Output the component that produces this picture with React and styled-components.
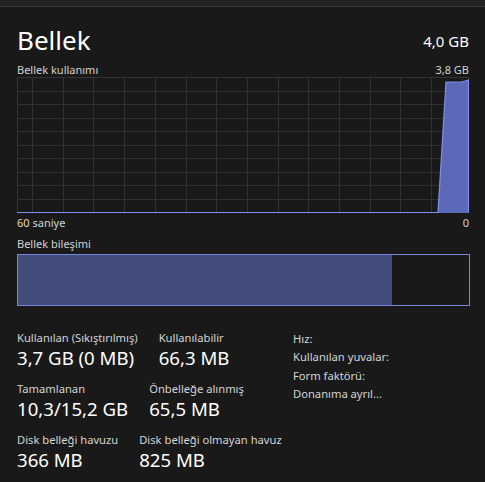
import React from "react";
import styled, { createGlobalStyle } from "styled-components";

const Global = createGlobalStyle`
  html, body { margin: 0; padding: 0; background: #191919; }
  body { font-family: "Noto Sans", "Segoe UI", sans-serif; color: #e6e6e6; }
  * { box-sizing: border-box; }
`;

const Page = styled.div`
  width: 485px;
  height: 482px;
  overflow: hidden;
  background: #191919;
`;

const TopStrip = styled.div`
  height: 7px;
  background: #222222;
  border-bottom: 1px solid #353535;
`;

const Content = styled.div`
  padding: 0 16px 0 17px;
`;

const Header = styled.div`
  display: flex;
  justify-content: space-between;
  align-items: flex-end;
  margin-top: 14px;
  height: 34px;
`;

const Title = styled.div`
  font-size: 26px;
  line-height: 30px;
  color: #ffffff;
`;

const Total = styled.div`
  font-size: 15px;
  line-height: 20px;
  color: #ffffff;
  margin-bottom: 4px;
`;

const CaptionRow = styled.div`
  display: flex;
  justify-content: space-between;
  font-size: 11px;
  line-height: 15px;
  color: #d2d2d2;
  margin-top: ${(p) => p.$top || 0}px;
`;

const Accent = styled.span`
  color: ${(p) => p.$c || "inherit"};
`;

const Graph = styled.svg`
  display: block;
  width: 452px;
  height: 136px;
`;

const Bar = styled.div`
  width: 453px;
  height: 52px;
  border: 1px solid #7587df;
  margin-top: 3px;
  display: flex;
`;

const BarFill = styled.div`
  background: #434d7c;
  height: 100%;
`;

const Stats = styled.div`
  display: flex;
  margin-top: 24px;
`;

const LeftStats = styled.div`
  display: flex;
  flex-direction: column;
  gap: 12px;
  width: 276px;
`;

const StatRow = styled.div`
  display: flex;
  gap: 21px;
`;

const Stat = styled.div`
  display: flex;
  flex-direction: column;
`;

const Label = styled.div`
  font-size: 11.2px;
  line-height: 16px;
  color: #d4d4d4;
  white-space: nowrap;
`;

const Value = styled.div`
  font-size: 18.6px;
  line-height: 23px;
  color: #ffffff;
  white-space: nowrap;
`;

const RightStats = styled.div`
  display: flex;
  flex-direction: column;
  font-size: 11.2px;
  line-height: 18.3px;
  color: #d4d4d4;
  white-space: nowrap;
`;

const W = 452;
const H = 136;
const vLines = Array.from({ length: 15 }, (_, i) => 15 + i * 30.7);
const hLines = Array.from({ length: 9 }, (_, i) => (i + 1) * 13.55);

function MemoryGraph() {
  return (
    <Graph viewBox={`0 0 ${W} ${H}`}>
      {vLines.map((x) => (
        <line key={"v" + x} x1={Math.round(x) + 0.5} x2={Math.round(x) + 0.5} y1="0" y2={H} stroke="#303030" strokeWidth="1" />
      ))}
      {hLines.map((y) => (
        <line key={"h" + y} x1="0" x2={W} y1={Math.round(y) + 0.5} y2={Math.round(y) + 0.5} stroke="#303030" strokeWidth="1" />
      ))}
      <rect x="0.5" y="0.5" width={W - 1} height={H - 1} fill="none" stroke="#333333" strokeWidth="1" />
      <polygon points={`421,135 429,5 445,5 452,3 452,136 421,136`} fill="#5b69b8" />
      <polyline points={`0,135.5 421,135.5 429,5 445,5 451.5,3 451.5,136`} fill="none" stroke="#7e90ea" strokeWidth="1.2" />
    </Graph>
  );
}

export default function App() {
  return (
    <Page>
      <Global />
      <TopStrip />
      <Content>
        <Header>
          <Title>Bellek</Title>
          <Total>4,0 GB</Total>
        </Header>
        <CaptionRow $top={7}>
          <span>Bellek kullanımı</span>
          <span>3,8 GB</span>
        </CaptionRow>
        <MemoryGraph />
        <CaptionRow $top={2}>
          <span><Accent $c="#e8d9b0">60</Accent> saniye</span>
          <span>0</span>
        </CaptionRow>
        <CaptionRow $top={6}>
          <span>Bellek bileşimi</span>
        </CaptionRow>
        <Bar>
          <BarFill style={{ width: `${(374 / 451) * 100}%` }} />
        </Bar>
        <Stats>
          <LeftStats>
            <StatRow>
              <Stat>
                <Label>Kullanılan (Sıkıştırılmış)</Label>
                <Value>3,7 GB (0 MB)</Value>
              </Stat>
              <Stat>
                <Label>Kullanılabilir</Label>
                <Value>66,3 MB</Value>
              </Stat>
            </StatRow>
            <StatRow>
              <Stat>
                <Label>Tamamlanan</Label>
                <Value>10,3/15,2 GB</Value>
              </Stat>
              <Stat>
                <Label>Önbelleğe alınmış</Label>
                <Value>65,5 MB</Value>
              </Stat>
            </StatRow>
            <StatRow>
              <Stat>
                <Label>Disk belleği havuzu</Label>
                <Value>366 MB</Value>
              </Stat>
              <Stat>
                <Label>Disk belleği olmayan havuz</Label>
                <Value>825 MB</Value>
              </Stat>
            </StatRow>
          </LeftStats>
          <RightStats>
            <span>Hız:</span>
            <span>Kullanılan yuvalar:</span>
            <span>Form faktörü:</span>
            <span>Donanıma ayrıl...</span>
          </RightStats>
        </Stats>
      </Content>
    </Page>
  );
}
